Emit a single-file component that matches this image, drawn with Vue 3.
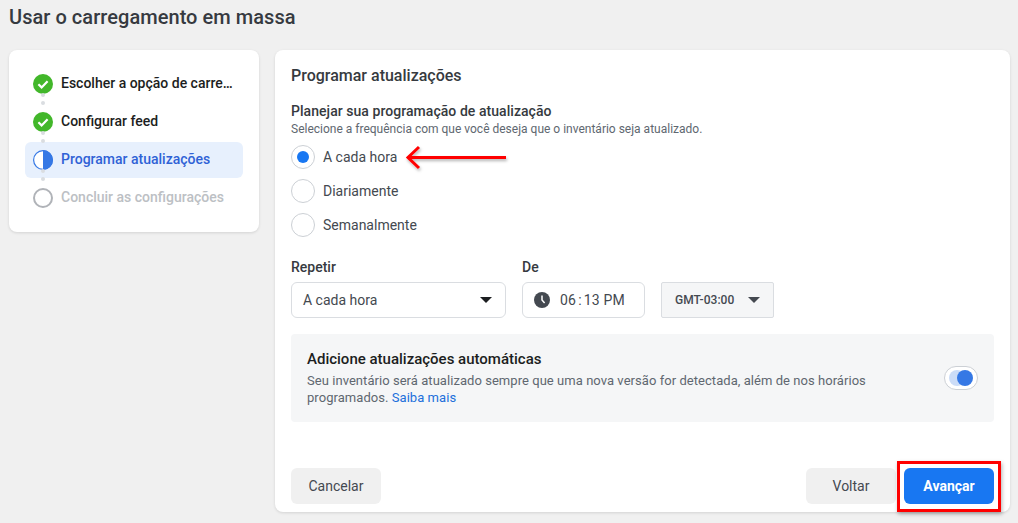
<script setup>
const steps = [
  { label: 'Escolher a opção de carregamento', state: 'done' },
  { label: 'Configurar feed', state: 'done' },
  { label: 'Programar atualizações', state: 'active' },
  { label: 'Concluir as configurações', state: 'todo' }
]
const radios = [
  { label: 'A cada hora', on: true },
  { label: 'Diariamente', on: false },
  { label: 'Semanalmente', on: false }
]
</script>

<template>
  <div class="page">
    <h1 class="title">Usar o carregamento em massa</h1>
    <div class="cols">
      <aside class="card side">
        <div v-for="(s, i) in steps" :key="s.label" class="step" :class="s.state">
          <span class="ico">
            <svg v-if="s.state === 'done'" width="20" height="20" viewBox="0 0 20 20">
              <circle cx="10" cy="10" r="10" fill="#42b72a" />
              <path d="M5.4 10.3l3.2 3.1 6-6.2" fill="none" stroke="#fff" stroke-width="2.2" />
            </svg>
            <svg v-else-if="s.state === 'active'" width="20" height="20" viewBox="0 0 20 20">
              <circle cx="10" cy="10" r="9.4" fill="#fff" stroke="#3578e5" stroke-width="1.2" />
              <path d="M10 0a10 10 0 0 1 0 20z" fill="#3578e5" />
            </svg>
            <svg v-else width="20" height="20" viewBox="0 0 20 20">
              <circle cx="10" cy="10" r="9" fill="#fff" stroke="#b0b3b8" stroke-width="2" />
            </svg>
          </span>
          <span class="step-label">{{ s.label }}</span>
          <span v-if="i < steps.length - 1" class="dots"><i></i><i></i></span>
        </div>
      </aside>

      <main class="card main">
        <h2 class="heading">Programar atualizações</h2>
        <div class="sub">Planejar sua programação de atualização</div>
        <div class="hint">Selecione a frequência com que você deseja que o inventário seja atualizado.</div>

        <div class="radios">
          <div v-for="r in radios" :key="r.label" class="radio-row">
            <span class="radio"><span v-if="r.on" class="radio-dot"></span></span>
            <span class="radio-label">{{ r.label }}</span>
          </div>
        </div>

        <div class="fields">
          <div class="field">
            <label class="field-label">Repetir</label>
            <div class="box select">
              <span>A cada hora</span>
              <span class="caret"></span>
            </div>
          </div>
          <div class="field">
            <label class="field-label">De</label>
            <div class="box time">
              <svg width="16" height="16" viewBox="0 0 16 16">
                <circle cx="8" cy="8" r="8" fill="#444950" />
                <path d="M8 3.4V8l2.6 3" fill="none" stroke="#fff" stroke-width="1.5" />
              </svg>
              <span class="time-text">06<span class="colon">:</span>13 PM</span>
            </div>
          </div>
          <div class="box gmt">
            <span>GMT-03:00</span>
            <span class="caret small"></span>
          </div>
        </div>

        <section class="info">
          <div class="info-text">
            <div class="info-title">Adicione atualizações automáticas</div>
            <p class="info-body">Seu inventário será atualizado sempre que uma nova versão for detectada, além de nos horários programados. <a class="link">Saiba mais</a></p>
          </div>
          <span class="toggle"><span class="knob"></span></span>
        </section>

        <footer class="actions">
          <button class="btn">Cancelar</button>
          <span class="spacer"></span>
          <button class="btn">Voltar</button>
          <span class="next-wrap">
            <button class="btn primary">Avançar</button>
            <span class="red-box"></span>
          </span>
        </footer>

        <svg class="arrow" width="110" height="32" viewBox="0 0 110 32">
          <defs>
            <filter id="sh" x="-10%" y="-50%" width="120%" height="200%">
              <feDropShadow dx="1" dy="2" stdDeviation="1.5" flood-color="#000" flood-opacity="0.3" />
            </filter>
          </defs>
          <g filter="url(#sh)" fill="none" stroke="#f00" stroke-width="3">
            <path d="M104 15.5H7" />
            <path d="M17 5L6 15.5 17 26" />
          </g>
        </svg>
      </main>
    </div>
  </div>
</template>

<style>
html, body { margin: 0; background: #f0f0f0; }
</style>

<style scoped>
.page {
  width: 1018px;
  height: 523px;
  overflow: hidden;
  box-sizing: border-box;
  background: #f0f0f0;
  font-family: Roboto, "Liberation Sans", sans-serif;
  color: #1c1e21;
  padding: 0 8px 0 9px;
}
.title {
  margin: 0;
  height: 50px;
  padding-top: 6px;
  box-sizing: border-box;
  font-size: 20px;
  line-height: 22px;
  font-weight: 500;
  color: #363a40;
  letter-spacing: 0.05px;
}
.cols { display: flex; gap: 16px; align-items: flex-start; }
.card {
  background: #fff;
  border-radius: 8px;
  box-shadow: 0 1px 3px rgba(0, 0, 0, 0.12);
  box-sizing: border-box;
}
.side {
  width: 250px;
  height: 182px;
  padding: 16px;
  display: flex;
  flex-direction: column;
  gap: 2px;
}
.step {
  position: relative;
  height: 36px;
  display: flex;
  align-items: center;
  border-radius: 6px;
  padding: 0 8px;
  font-size: 14px;
  font-weight: 500;
}
.ico { width: 20px; height: 20px; flex: none; margin-right: 8px; display: flex; }
.step-label { white-space: nowrap; overflow: hidden; text-overflow: ellipsis; position: relative; top: -1px; }
.active { background: #e7f0fd; color: #2f62d6; }
.todo { color: #bcc0c4; }
.dots {
  position: absolute;
  left: 16px;
  top: 27px;
  display: flex;
  flex-direction: column;
  gap: 4px;
  z-index: 1;
}
.dots i { width: 4px; height: 4px; border-radius: 50%; background: #dadde1; display: block; }

.main {
  position: relative;
  width: 735px;
  height: 462px;
  padding: 16px;
  display: flex;
  flex-direction: column;
}
.heading {
  margin: 0;
  font-size: 16px;
  line-height: 20px;
  font-weight: 500;
  color: #363a40;
}
.sub {
  margin-top: 15px;
  font-size: 14px;
  line-height: 20px;
  font-weight: 500;
  color: #363a40;
  letter-spacing: 0.05px;
}
.hint { font-size: 12px; line-height: 16px; color: #606770; }
.radios { margin-top: 8px; display: flex; flex-direction: column; gap: 10px; }
.radio-row { display: flex; align-items: center; height: 24px; gap: 8px; }
.radio {
  width: 24px;
  height: 24px;
  box-sizing: border-box;
  border: 1px solid #ccd0d5;
  border-radius: 50%;
  display: flex;
  align-items: center;
  justify-content: center;
  background: #fff;
}
.radio-dot { width: 12px; height: 12px; border-radius: 50%; background: #1877f2; }
.radio-label { font-size: 14px; color: #444950; }

.fields { margin-top: 21px; display: flex; gap: 16px; align-items: flex-end; }
.field { display: flex; flex-direction: column; gap: 6px; }
.field-label { font-size: 14px; line-height: 18px; font-weight: 500; color: #363a40; }
.box {
  height: 36px;
  box-sizing: border-box;
  border: 1px solid #dadde1;
  border-radius: 6px;
  display: flex;
  align-items: center;
  font-size: 14px;
  color: #444950;
}
.select { width: 215px; padding: 0 13px 0 11px; justify-content: space-between; }
.time { width: 123px; padding: 0 11px; gap: 10px; }
.time-text { letter-spacing: 0.2px; white-space: nowrap; }
.colon { margin: 0 2px 0 2px; }
.gmt {
  width: 113px;
  padding: 0 13px;
  justify-content: space-between;
  background: #f5f6f7;
  border-radius: 2px;
  font-size: 12px;
  font-weight: 500;
  color: #444950;
  letter-spacing: 0.05px;
}
.caret {
  width: 0;
  height: 0;
  border-left: 6px solid transparent;
  border-right: 6px solid transparent;
  border-top: 6px solid #1c1e21;
}
.caret.small { border-top-color: #444950; }

.info {
  margin-top: 16px;
  height: 88px;
  box-sizing: border-box;
  background: #f5f6f7;
  border-radius: 4px;
  padding: 16px;
  display: flex;
  align-items: center;
  gap: 16px;
}
.info-text { flex: 1; align-self: flex-start; }
.info-title { font-size: 15px; line-height: 18px; font-weight: 500; color: #1c1e21; }
.info-body { margin: 4px 0 0; font-size: 13px; line-height: 17px; color: #606770; width: 590px; letter-spacing: 0.05px; }
.link { color: #216fdb; }
.toggle {
  position: relative;
  width: 34px;
  height: 24px;
  box-sizing: border-box;
  border: 1px solid #ccd0d5;
  border-radius: 12px;
  background: #fff;
  display: flex;
}
.toggle .knob {
  position: absolute;
  top: 3px;
  left: 12px;
  width: 16px;
  height: 16px;
  border-radius: 50%;
  background: #3578e5;
  box-shadow: -8px 0 0 0 #cbdcf7;
}

.actions { margin-top: auto; display: flex; align-items: center; gap: 8px; margin-bottom: -8px; }
.spacer { flex: 1; }
.btn {
  width: 90px;
  height: 36px;
  border: 0;
  border-radius: 6px;
  background: #f0f0f0;
  font: 400 14px Roboto, "Liberation Sans", sans-serif;
  color: #444950;
  padding: 0;
}
.primary { background: #1877f2; color: #fff; font-weight: 700; }
.next-wrap { position: relative; display: flex; }
.red-box {
  position: absolute;
  left: -7px;
  top: -7px;
  width: 104px;
  height: 51px;
  box-sizing: border-box;
  border: 3px solid #f00;
  box-shadow: 1px 2px 4px rgba(0, 0, 0, 0.3);
}
.arrow { position: absolute; left: 127px; top: 92px; }
</style>
